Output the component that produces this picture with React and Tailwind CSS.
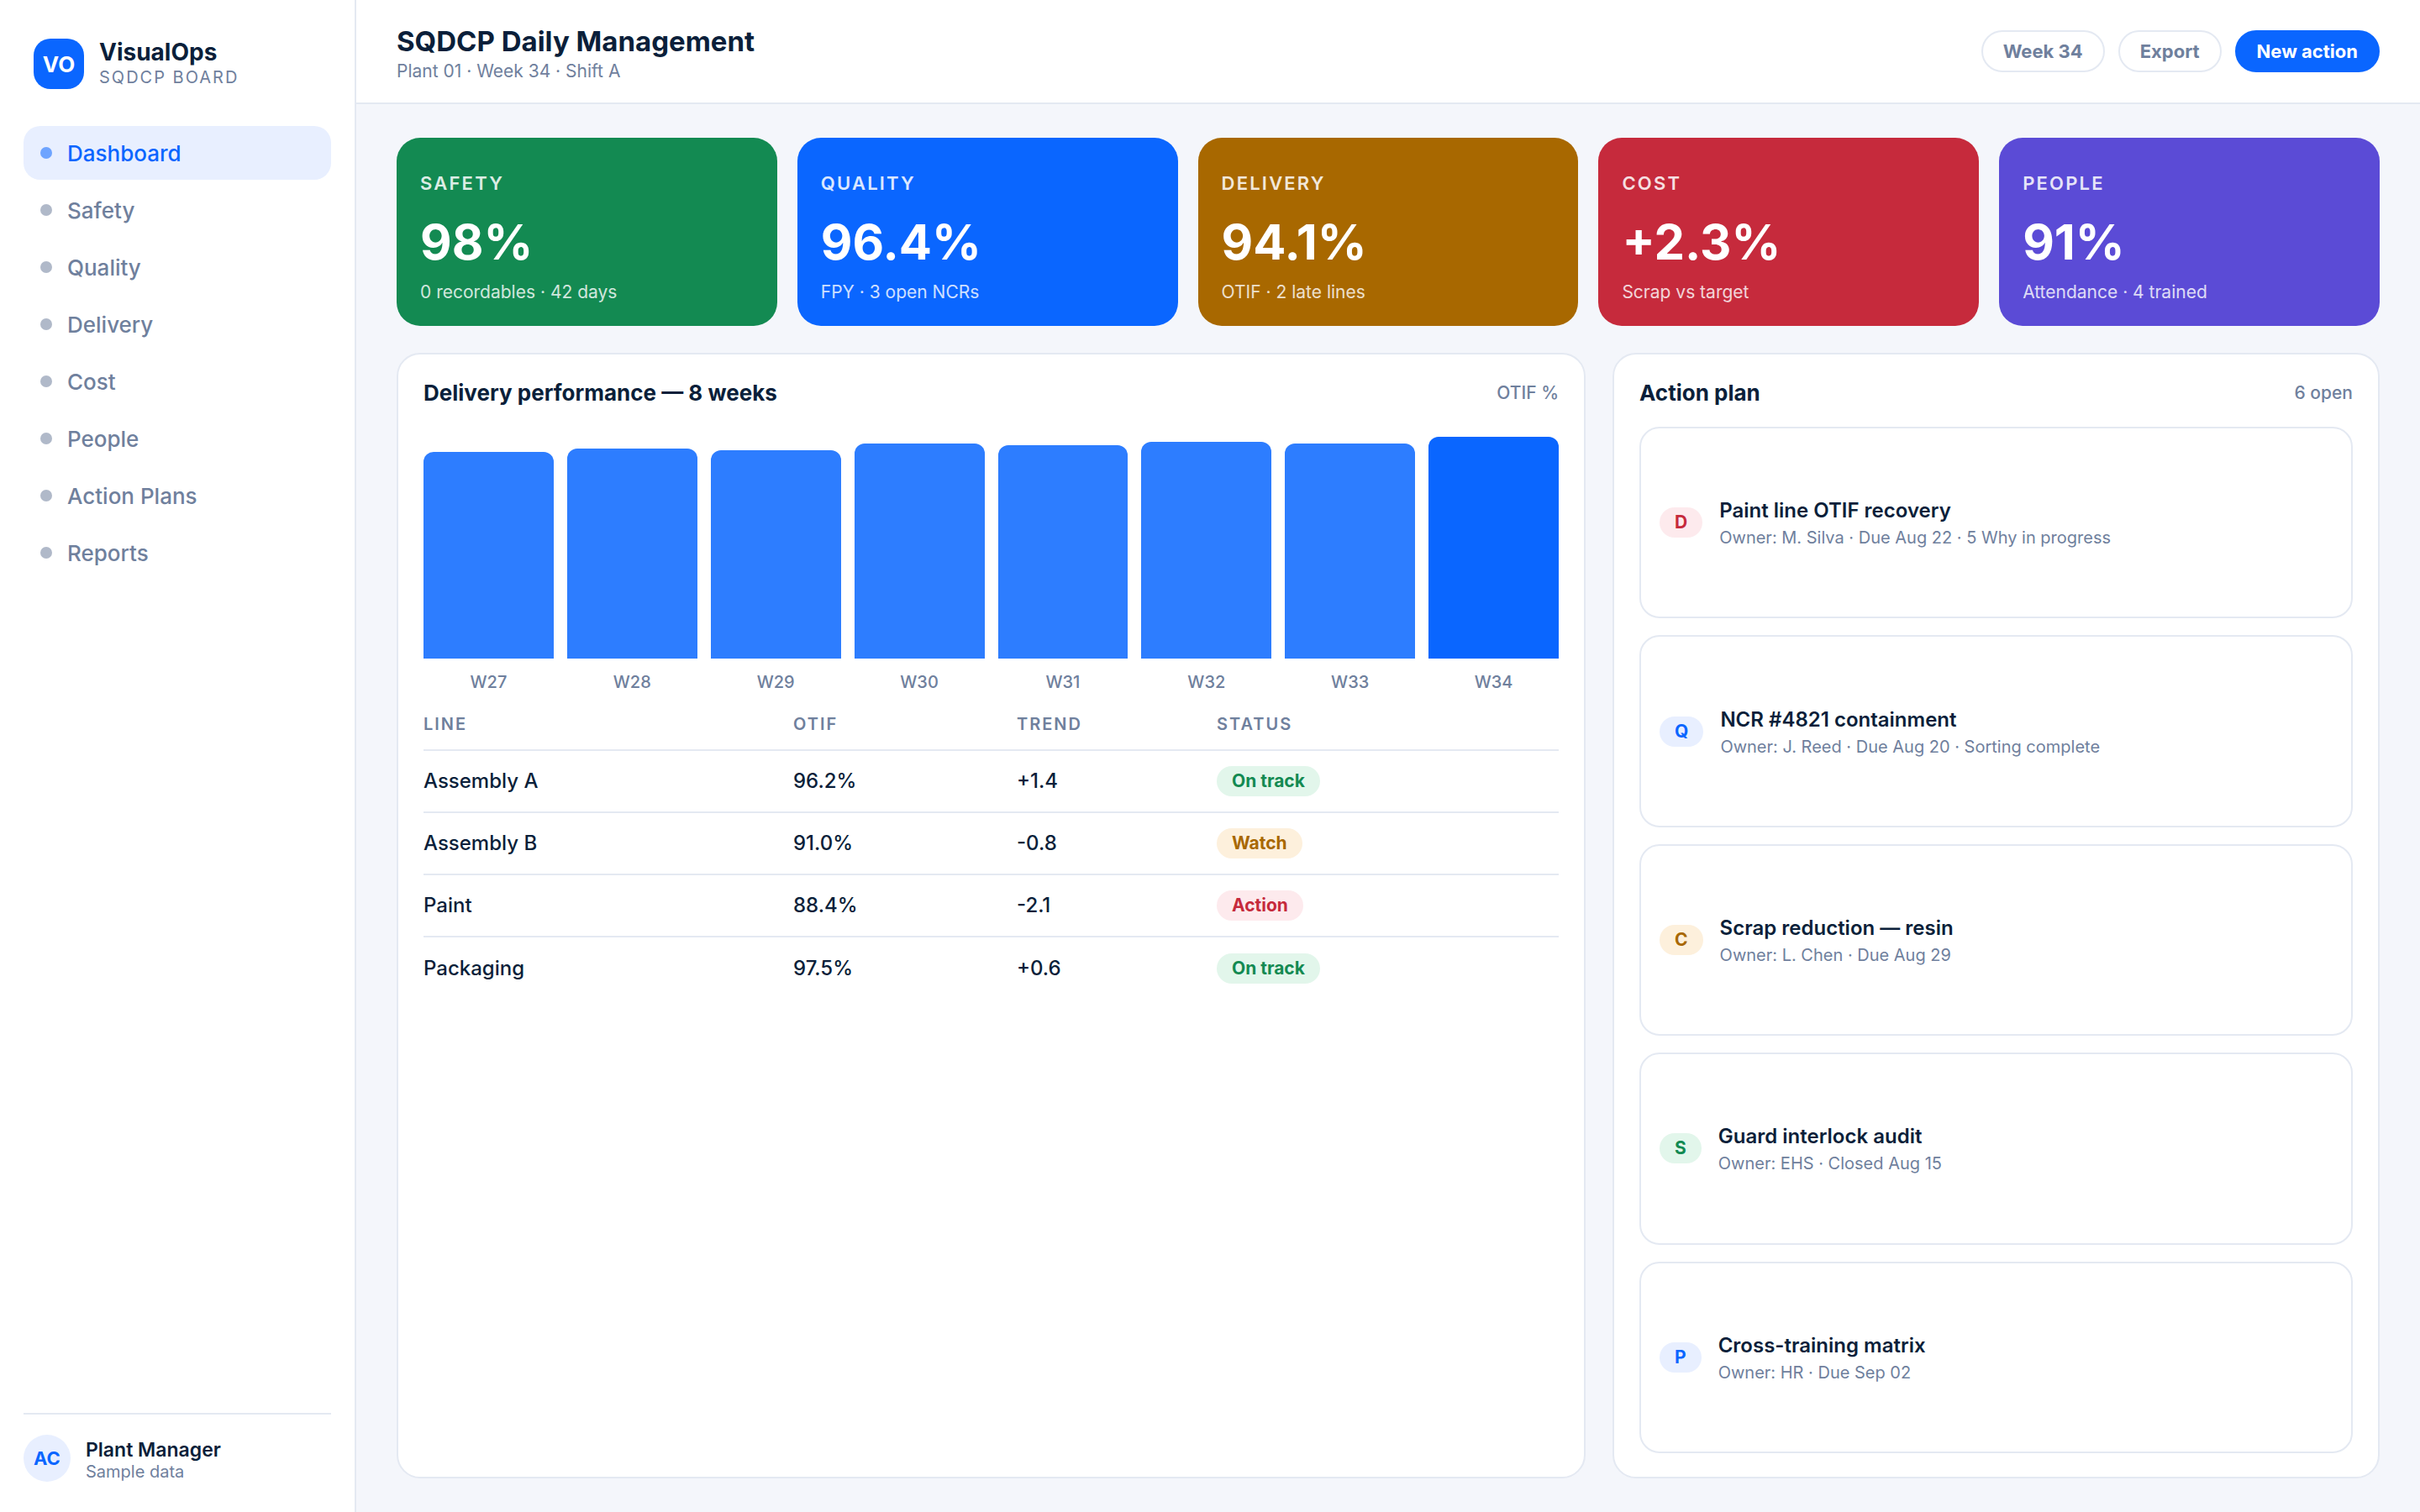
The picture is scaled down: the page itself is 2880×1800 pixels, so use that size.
import React, { useState } from 'react';
import clsx from 'clsx';

const navItems = ['Dashboard', 'Safety', 'Quality', 'Delivery', 'Cost', 'People', 'Action Plans', 'Reports'];

const kpis = [
  { label: 'Safety', value: '98%', note: '0 recordables · 42 days', color: 'bg-[#138a52]' },
  { label: 'Quality', value: '96.4%', note: 'FPY · 3 open NCRs', color: 'bg-[#0a66ff]' },
  { label: 'Delivery', value: '94.1%', note: 'OTIF · 2 late lines', color: 'bg-[#a86800]' },
  { label: 'Cost', value: '+2.3%', note: 'Scrap vs target', color: 'bg-[#c62a3c]' },
  { label: 'People', value: '91%', note: 'Attendance · 4 trained', color: 'bg-[#5b4bd6]' },
];

const weeks = [
  { week: 'W27', height: 246 },
  { week: 'W28', height: 250 },
  { week: 'W29', height: 248 },
  { week: 'W30', height: 256 },
  { week: 'W31', height: 254 },
  { week: 'W32', height: 258 },
  { week: 'W33', height: 256 },
  { week: 'W34', height: 264 },
];

const lines = [
  { name: 'Assembly A', otif: '96.2%', trend: '+1.4', status: 'On track', tone: 'green' },
  { name: 'Assembly B', otif: '91.0%', trend: '-0.8', status: 'Watch', tone: 'amber' },
  { name: 'Paint', otif: '88.4%', trend: '-2.1', status: 'Action', tone: 'red' },
  { name: 'Packaging', otif: '97.5%', trend: '+0.6', status: 'On track', tone: 'green' },
];

const actions = [
  { tag: 'D', tone: 'red', title: 'Paint line OTIF recovery', meta: 'Owner: M. Silva · Due Aug 22 · 5 Why in progress' },
  { tag: 'Q', tone: 'blue', title: 'NCR #4821 containment', meta: 'Owner: J. Reed · Due Aug 20 · Sorting complete' },
  { tag: 'C', tone: 'amber', title: 'Scrap reduction — resin', meta: 'Owner: L. Chen · Due Aug 29' },
  { tag: 'S', tone: 'green', title: 'Guard interlock audit', meta: 'Owner: EHS · Closed Aug 15' },
  { tag: 'P', tone: 'blue', title: 'Cross-training matrix', meta: 'Owner: HR · Due Sep 02' },
];

const tones = {
  green: 'bg-[#e2f6eb] text-[#138a52]',
  amber: 'bg-[#fdf0dc] text-[#a86800]',
  red: 'bg-[#fdeaed] text-[#c62a3c]',
  blue: 'bg-[#e8efff] text-[#0a66ff]',
};

const Pill = ({ tone, children }) => (
  <span className={clsx('inline-block shrink-0 rounded-full px-[18px] py-1 text-[21px] leading-7 font-bold', tones[tone])}>
    {children}
  </span>
);

const Sidebar = () => {
  const [active, setActive] = useState('Dashboard');

  return (
    <aside className="flex w-[424px] shrink-0 flex-col border-r-2 border-[#e4e9f2] bg-white px-7 pt-[46px] pb-9">
      <div className="flex items-center gap-[18px] px-3">
        <div className="flex size-[60px] items-center justify-center rounded-[20px] bg-[#0a66ff] text-[26px] font-bold text-white">
          VO
        </div>
        <div>
          <div className="text-[28px] leading-8 font-bold">VisualOps</div>
          <div className="text-xl leading-7 tracking-widest text-[#6f809d]">SQDCP BOARD</div>
        </div>
      </div>

      <nav className="mt-11 flex flex-col gap-1">
        {navItems.map(item => (
          <a
            key={item}
            href="#"
            onClick={() => setActive(item)}
            className={clsx(
              'flex h-16 items-center gap-[18px] rounded-[20px] px-5 text-[26px] font-medium',
              item === active ? 'bg-[#e8efff] text-[#0a66ff]' : 'text-[#6f809d]'
            )}
          >
            <span className="size-3.5 rounded-full bg-current opacity-55" />
            {item}
          </a>
        ))}
      </nav>

      <div className="mt-auto flex items-center gap-[18px] border-t-2 border-[#e4e9f2] pt-6">
        <div className="flex size-14 items-center justify-center rounded-full bg-[#e8efff] text-[22px] font-bold text-[#0a66ff]">
          AC
        </div>
        <div className="pt-1">
          <div className="text-[23px] leading-7 font-semibold">Plant Manager</div>
          <div className="text-xl leading-6 text-[#6f809d]">Sample data</div>
        </div>
      </div>
    </aside>
  );
};

const Header = () => (
  <header className="flex items-center justify-between border-b-2 border-[#e4e9f2] bg-white px-12">
    <div className="pt-7 pb-[22px]">
      <h1 className="text-[33px] leading-[42px] font-bold">SQDCP Daily Management</h1>
      <p className="text-[21px] leading-[30px] text-[#6f809d]">Plant 01 · Week 34 · Shift A</p>
    </div>
    <div className="flex gap-4">
      <button className="h-[50px] rounded-full border-2 border-[#e4e9f2] bg-white px-6 text-[22px] font-bold text-[#6f809d]">
        Week 34
      </button>
      <button className="h-[50px] rounded-full border-2 border-[#e4e9f2] bg-white px-6 text-[22px] font-bold text-[#6f809d]">
        Export
      </button>
      <button className="h-[50px] rounded-full border-2 border-[#0a66ff] bg-[#0a66ff] px-6 text-[22px] font-bold text-white">
        New action
      </button>
    </div>
  </header>
);

const PanelHeader = ({ title, note }) => (
  <div className="flex items-center justify-between">
    <h2 className="text-[26px] leading-9 font-bold">{title}</h2>
    <span className="text-[21px] font-medium text-[#6f809d]">{note}</span>
  </div>
);

const DeliveryPanel = () => (
  <section className="rounded-[28px] border-2 border-[#e4e9f2] bg-white px-[30px] py-7">
    <PanelHeader title="Delivery performance — 8 weeks" note="OTIF %" />

    <div className="mt-[34px] flex items-end gap-4">
      {weeks.map((w, i) => (
        <div key={w.week} className="flex-1 text-center">
          <div
            className={clsx('rounded-t-xl', i === weeks.length - 1 ? 'bg-[#0a66ff]' : 'bg-[#2d7dff]')}
            style={{ height: w.height }}
          />
          <div className="mt-3.5 text-xl leading-7 font-medium text-[#6f809d]">{w.week}</div>
        </div>
      ))}
    </div>

    <table className="mt-1.5 w-full table-fixed text-left">
      <thead>
        <tr className="h-[61px] border-b-2 border-[#e4e9f2] text-xl tracking-widest text-[#6f809d]">
          <th className="w-[440px] font-semibold">LINE</th>
          <th className="w-[266px] font-semibold">OTIF</th>
          <th className="w-[238px] font-semibold">TREND</th>
          <th className="font-semibold">STATUS</th>
        </tr>
      </thead>
      <tbody>
        {lines.map(line => (
          <tr key={line.name} className="h-[74px] border-b-2 border-[#e4e9f2] text-2xl font-medium last:border-b-0">
            <td>{line.name}</td>
            <td>{line.otif}</td>
            <td>{line.trend}</td>
            <td>
              <Pill tone={line.tone}>{line.status}</Pill>
            </td>
          </tr>
        ))}
      </tbody>
    </table>
  </section>
);

const ActionPanel = () => (
  <section className="flex flex-col rounded-[28px] border-2 border-[#e4e9f2] bg-white px-[30px] py-7">
    <PanelHeader title="Action plan" note="6 open" />
    <ul className="mt-[22px] flex flex-1 flex-col gap-5">
      {actions.map(action => (
        <li key={action.tag} className="flex flex-1 items-center gap-5 rounded-3xl border-2 border-[#e4e9f2] px-[22px] py-5">
          <Pill tone={action.tone}>{action.tag}</Pill>
          <div className="pt-1">
            <div className="text-2xl leading-8 font-semibold">{action.title}</div>
            <div className="text-xl leading-8 text-[#6f809d]">{action.meta}</div>
          </div>
        </li>
      ))}
    </ul>
  </section>
);

const App = () => {
  return (
    <div className="flex min-h-screen bg-[#f4f6fb] font-['Inter',sans-serif] text-[#0b1f3a]">
      <Sidebar />
      <div className="flex min-w-0 flex-1 flex-col">
        <Header />
        <main className="flex flex-1 flex-col gap-8 px-12 py-10">
          <div className="grid grid-cols-5 gap-6">
            {kpis.map(kpi => (
              <div key={kpi.label} className={clsx('rounded-[28px] px-7 pt-9 pb-6 text-white', kpi.color)}>
                <div className="text-[22px] leading-9 font-semibold tracking-widest uppercase opacity-85">{kpi.label}</div>
                <div className="mt-3 text-[58px] leading-[80px] font-bold">{kpi.value}</div>
                <div className="mt-1 text-[21px] leading-8 opacity-80">{kpi.note}</div>
              </div>
            ))}
          </div>
          <div className="grid flex-1 grid-cols-[1.55fr_1fr] gap-8">
            <DeliveryPanel />
            <ActionPanel />
          </div>
        </main>
      </div>
    </div>
  );
};

export default App;
